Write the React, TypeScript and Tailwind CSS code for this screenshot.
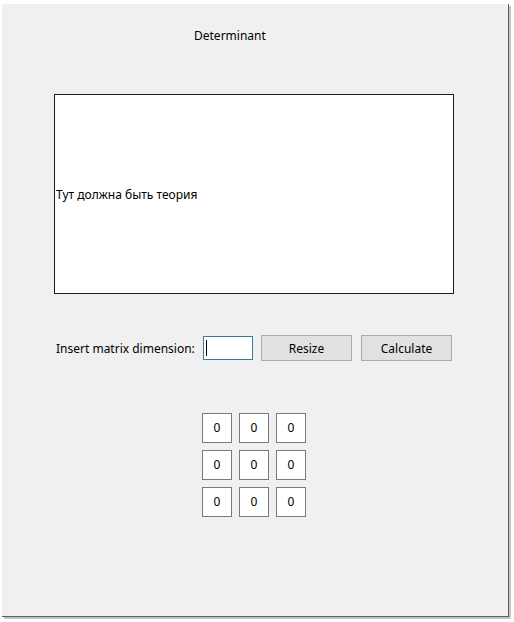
const font = { fontFamily: '"Noto Sans", "Open Sans", sans-serif' };

function Cell({ value }: { value: number }) {
  return (
    <div className="w-[30px] h-[30px] bg-white border border-[#7a7a7a] flex items-center justify-center text-[12px] text-black">
      {value}
    </div>
  );
}

export default function App() {
  const matrix = [
    [0, 0, 0],
    [0, 0, 0],
    [0, 0, 0],
  ];

  return (
    <div className="w-[514px] h-[622px] bg-white pt-[4px] pl-[2px]" style={font}>
      {/* Window */}
      <div className="w-[507px] h-[613px] bg-[#f0f0f0] border-r border-b border-[#5f5f5f] shadow-[2px_2px_0_#c4c4c4] flex flex-col text-black">
        {/* Title */}
        <div className="mt-[24px] ml-[192px] h-[16px] leading-[16px] text-[12px]">Determinant</div>

        {/* Theory box */}
        <div className="mt-[50px] ml-[52px] w-[400px] h-[200px] bg-white border border-[#1c1c1c] flex items-center pl-[1px] pt-[1px] text-[12px] leading-[16px]">
          Тут должна быть теория
        </div>

        {/* Controls row */}
        <div className="mt-[41px] ml-[54px] h-[26px] flex items-center text-[12px] leading-[16px]">
          <span className="w-[139px] whitespace-nowrap pt-[1px]">Insert matrix dimension:</span>
          <div className="ml-[8px] w-[50px] h-[24px] bg-white border border-[#3f7b99] flex items-center pl-[2px]">
            <span className="w-[1px] h-[16px] bg-black" />
          </div>
          <button className="ml-[8px] w-[91px] h-[26px] bg-[#e1e1e1] border border-[#adadad] text-[12px] pt-[1px]">
            Resize
          </button>
          <button className="ml-[9px] w-[91px] h-[26px] bg-[#e1e1e1] border border-[#adadad] text-[12px] pt-[1px]">
            Calculate
          </button>
        </div>

        {/* Matrix */}
        <div className="mt-[52px] ml-[200px] flex flex-col gap-[7px]">
          {matrix.map((row, i) => (
            <div key={i} className="flex gap-[7px]">
              {row.map((v, j) => (
                <Cell key={j} value={v} />
              ))}
            </div>
          ))}
        </div>
      </div>
    </div>
  );
}
